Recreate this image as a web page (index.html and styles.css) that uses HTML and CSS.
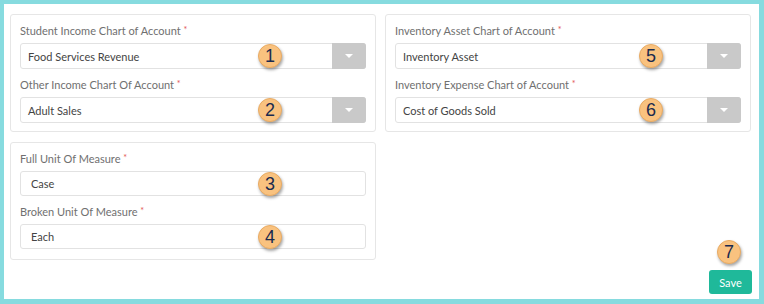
FILE: index.html
```html
<!DOCTYPE html>
<html lang="en">
<head>
  <meta charset="UTF-8" />
  <title>Chart of Account Settings</title>
  <link rel="stylesheet" href="styles.css">
</head>
<body>
  <div class="frame">
    <div class="layout">

      <div class="panel">
        <div class="field">
          <label>Student Income Chart of Account <span class="req">*</span></label>
          <div class="select">
            <span class="value">Food Services Revenue</span>
            <span class="caret"></span>
            <span class="badge left-badge">1</span>
          </div>
        </div>
        <div class="field">
          <label>Other Income Chart Of Account <span class="req">*</span></label>
          <div class="select">
            <span class="value">Adult Sales</span>
            <span class="caret"></span>
            <span class="badge left-badge">2</span>
          </div>
        </div>
      </div>

      <div class="panel">
        <div class="field">
          <label>Inventory Asset Chart of Account <span class="req">*</span></label>
          <div class="select">
            <span class="value">Inventory Asset</span>
            <span class="caret"></span>
            <span class="badge right-badge">5</span>
          </div>
        </div>
        <div class="field">
          <label>Inventory Expense Chart of Account <span class="req">*</span></label>
          <div class="select">
            <span class="value">Cost of Goods Sold</span>
            <span class="caret"></span>
            <span class="badge right-badge">6</span>
          </div>
        </div>
      </div>

      <div class="panel">
        <div class="field">
          <label>Full Unit Of Measure <span class="req">*</span></label>
          <div class="input">
            <span class="value">Case</span>
            <span class="badge left-badge">3</span>
          </div>
        </div>
        <div class="field">
          <label>Broken Unit Of Measure <span class="req">*</span></label>
          <div class="input">
            <span class="value">Each</span>
            <span class="badge left-badge">4</span>
          </div>
        </div>
      </div>

      <div class="actions">
        <button class="save">Save</button>
        <span class="badge save-badge">7</span>
      </div>

    </div>
  </div>
</body>
</html>
```

FILE: styles.css
```css
body {
  margin: 0;
  font-family: Lato, "Open Sans", sans-serif;
  background-color: #ffffff;
}
.frame {
  width: 764px;
  height: 304px;
  box-sizing: border-box;
  border: 4px solid #86dbdf;
  border-right-width: 5px;
  border-bottom-width: 5px;
  background-color: #fff;
}
.layout {
  display: grid;
  grid-template-columns: 366px 366px;
  grid-template-rows: 118px 118px auto;
  column-gap: 9px;
  row-gap: 10px;
  padding: 10px 0 0 6px;
}
.panel {
  border: 1px solid #e6e6e6;
  border-radius: 3px;
  padding: 7px 9px 0 9px;
}
.field label {
  display: block;
  font-size: 11px;
  color: #707070;
  line-height: 16px;
  margin-bottom: 4px;
}
.req {
  color: #e25555;
  font-size: 9px;
  vertical-align: 2px;
}
.field + .field {
  margin-top: 7px;
}
.select,
.input {
  position: relative;
  display: flex;
  align-items: center;
  height: 26px;
  box-sizing: border-box;
  border: 1px solid #e2e2e2;
  border-radius: 3px;
  font-size: 11px;
  color: #444;
}
.select .value {
  flex: 1;
  padding-left: 7px;
}
.input {
  height: 25px;
}
.input .value {
  padding-left: 10px;
}
.caret {
  width: 34px;
  height: 26px;
  margin: -1px -1px -1px 0;
  background-color: #c9c9c9;
  border-radius: 0 3px 3px 0;
  display: flex;
  align-items: center;
  justify-content: center;
}
.caret::after {
  content: "";
  border-left: 4px solid transparent;
  border-right: 4px solid transparent;
  border-top: 4px solid #fff;
}
.badge {
  position: absolute;
  width: 24px;
  height: 24px;
  border-radius: 50%;
  background-color: #f9c27f;
  border: 1px solid #e9ab63;
  box-sizing: border-box;
  box-shadow: 1px 2px 3px rgba(0, 0, 0, 0.35);
  color: #1b2a4e;
  font-family: "Liberation Sans", Arial, sans-serif;
  font-size: 18px;
  line-height: 23px;
  text-align: center;
}
.left-badge {
  left: 237px;
  top: 0;
}
.right-badge {
  left: 243px;
  top: 0;
}
.actions {
  grid-column: 2;
  grid-row: 3;
  position: relative;
  display: flex;
  justify-content: flex-end;
}
.save {
  width: 43px;
  height: 24px;
  margin-right: -1px;
  background-color: #1fb99a;
  color: #fff;
  border: none;
  border-radius: 3px;
  font-family: Lato, sans-serif;
  font-size: 11px;
  padding: 0;
}
.save-badge {
  right: 10px;
  top: -30px;
}
```
